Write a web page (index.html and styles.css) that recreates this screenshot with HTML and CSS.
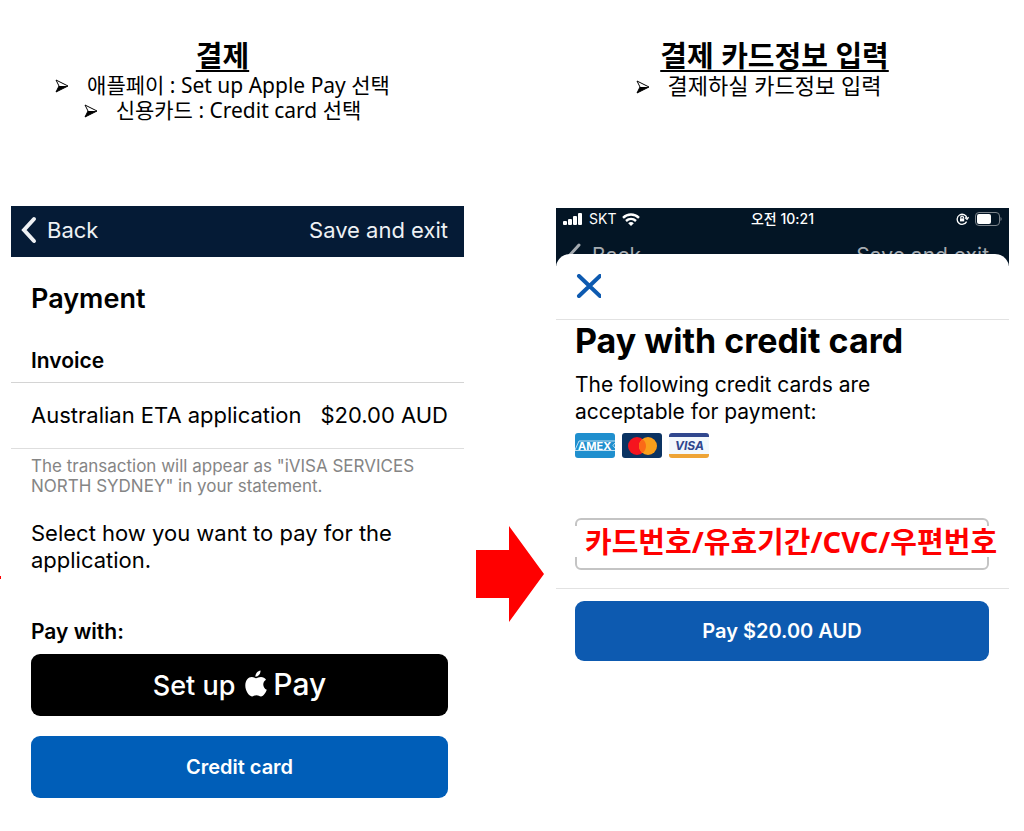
FILE: index.html
```html
<!DOCTYPE html>
<html lang="ko">
<head>
    <meta charset="UTF-8">
    <meta name="viewport" content="width=device-width, initial-scale=1.0">
    <title>결제</title>
    <link rel="stylesheet" href="styles.css">
</head>
<body>

    <main class="steps">
        <!-- Tip of the arrow coming from the previous step -->
        <span class="prev-tip"></span>

        <!-- Step: choose a payment method -->
        <section class="step">
            <div class="guide">
                <h1>결제</h1>
                <ul>
                    <li><svg class="bullet" viewBox="0 0 14 14"><path d="M1 1L13 7L1 13L4 7Z" fill="#fff" stroke="#000"/><path d="M4 7H13L1 13Z"/></svg>애플페이 : Set up Apple Pay 선택</li>
                    <li><svg class="bullet" viewBox="0 0 14 14"><path d="M1 1L13 7L1 13L4 7Z" fill="#fff" stroke="#000"/><path d="M4 7H13L1 13Z"/></svg>신용카드 : Credit card 선택</li>
                </ul>
            </div>

            <div class="phone">
                <nav class="navbar">
                    <a href="#" class="back"><svg width="16" height="28" viewBox="0 0 16 28"><path d="M13 3L3 14L13 25" fill="none" stroke="currentColor" stroke-width="4" stroke-linecap="round"/></svg>Back</a>
                    <a href="#">Save and exit</a>
                </nav>
                <h2 class="payment-title">Payment</h2>
                <h3 class="invoice-title">Invoice</h3>
                <div class="invoice-row">
                    <span>Australian ETA application</span>
                    <span>$20.00 AUD</span>
                </div>
                <p class="note">The transaction will appear as "iVISA SERVICES NORTH SYDNEY" in your statement.</p>
                <p class="select-text">Select how you want to pay for the application.</p>
                <h3 class="pay-with">Pay with:</h3>
                <div class="buttons">
                    <button type="button" class="btn apple-pay">
                        <span>Set up</span>
                        <svg width="22" height="27" viewBox="0 0 22 27" fill="#fff"><path d="M15.5 0.5C15.7 3.8 13.2 6.8 10.4 6.7C10.2 3.6 12.8 0.9 15.5 0.5Z"/><path d="M11 8.2C12.3 8.2 13.7 7 16 7C18 7 19.9 8 21 9.7C17 12 17.5 18 21.8 19.8C20.8 22.5 18.6 26.4 16 26.4C14.3 26.4 13.6 25.3 11.5 25.3C9.4 25.3 8.6 26.4 7 26.4C3.7 26.4 0.3 20.6 0.3 15.6C0.3 10.2 3.4 7 6.8 7C8.7 7 10 8.2 11 8.2Z"/></svg>
                        <span class="pay-word">Pay</span>
                    </button>
                    <button type="button" class="btn credit">Credit card</button>
                </div>
            </div>
        </section>

        <svg class="arrow" viewBox="0 0 68 96"><path d="M0 24H33V0L68 48L33 96V72H0Z" fill="#ff0000"/></svg>

        <!-- Step: enter the card details -->
        <section class="step card-step">
            <div class="guide">
                <h1>결제 카드정보 입력</h1>
                <ul>
                    <li><svg class="bullet" viewBox="0 0 14 14"><path d="M1 1L13 7L1 13L4 7Z" fill="#fff" stroke="#000"/><path d="M4 7H13L1 13Z"/></svg>결제하실 카드정보 입력</li>
                </ul>
            </div>

            <div class="phone">
                <div class="behind">
                    <div class="status">
                        <div class="carrier">
                            <svg width="20" height="12" viewBox="0 0 20 12" fill="#fff"><rect y="8" width="4" height="4" rx="1"/><rect x="5" y="6" width="4" height="6" rx="1"/><rect x="10" y="3" width="4" height="9" rx="1"/><rect x="15" width="4" height="12" rx="1"/></svg>
                            <span>SKT</span>
                            <svg width="18" height="13" viewBox="0 0 18 13" fill="none" stroke="#fff" stroke-width="2.4"><path d="M1 4.8C5.5 0.4 12.5 0.4 17 4.8"/><path d="M4 8C7 5.2 11 5.2 14 8"/><path d="M9 13L6.2 10.2C7.8 8.7 10.2 8.7 11.8 10.2Z" fill="#fff" stroke="none"/></svg>
                        </div>
                        <span class="time">오전 10:21</span>
                        <div class="battery">
                            <svg width="13" height="12" viewBox="0 0 13 12" fill="none" stroke="#fff" stroke-width="1.3"><path d="M10.6 8.6A5 5 0 1 1 11 5"/><path d="M9 4.6L11 6.4L12.6 4.2"/><path d="M4.8 5.6V4.4A1.3 1.3 0 0 1 7.4 4.4V5.6"/><rect x="4" y="5.4" width="4.2" height="3" fill="#fff" stroke="none"/></svg>
                            <svg width="27" height="14" viewBox="0 0 27 14"><rect x="0.5" y="0.5" width="24" height="13" rx="3.5" fill="none" stroke="#7d858d"/><rect x="2" y="2" width="14" height="10" rx="2" fill="#fff"/><path d="M25.500 5C27 5.500 27 8.500 25.500 9Z" fill="#7d858d"/></svg>
                        </div>
                    </div>
                    <nav class="navbar">
                        <a href="#" class="back"><svg width="16" height="28" viewBox="0 0 16 28"><path d="M13 3L3 14L13 25" fill="none" stroke="currentColor" stroke-width="3" stroke-linecap="round"/></svg>Back</a>
                        <a href="#">Save and exit</a>
                    </nav>
                </div>

                <div class="sheet">
                    <div class="sheet-bar">
                        <button type="button" class="close" aria-label="Close"><svg width="26" height="24" viewBox="0 0 26 24"><path d="M4 2L25 22M25 2L4 22" stroke="#0d5ab0" stroke-width="4" stroke-linecap="round"/></svg></button>
                    </div>
                    <div class="sheet-body">
                        <h2>Pay with credit card</h2>
                        <p>The following credit cards are acceptable for payment:</p>
                        <div class="logos">
                            <svg width="40" height="25" viewBox="0 0 40 25"><rect width="40" height="25" rx="3" fill="#1f8fce"/><path d="M0 17L4 8H40M0 17.500H40M40 10L38 12.500L40 15" fill="none" stroke="#bfe0f3"/><text x="3" y="17" font-size="11" class="amex">AMEX</text></svg>
                            <svg width="40" height="25" viewBox="0 0 40 25"><rect width="40" height="25" rx="3" fill="#0b3362"/><circle cx="15" cy="13" r="9" fill="#f5141e"/><circle cx="26" cy="13" r="9" fill="#f99f1b"/><path d="M20.500 5.900A9 9 0 0 1 20.500 20.100A9 9 0 0 1 20.500 5.900Z" fill="#fb6a17"/></svg>
                            <svg width="40" height="25" viewBox="0 0 40 25"><rect width="40" height="25" rx="3" fill="#f3f8fc"/><path d="M0 4V3A3 3 0 0 1 3 0H37A3 3 0 0 1 40 3V4Z" fill="#30478e"/><path d="M0 21V22A3 3 0 0 0 3 25H37A3 3 0 0 0 40 22V21Z" fill="#eea436"/><text x="6" y="17" font-size="12" class="visa">VISA</text></svg>
                        </div>
                        <div class="card-field">
                            <input type="text" id="card-number">
                            <label for="card-number">카드번호/유효기간/CVC/우편번호</label>
                        </div>
                    </div>
                    <div class="sheet-footer">
                        <button type="button" class="btn pay">Pay $20.00 AUD</button>
                    </div>
                </div>
            </div>
        </section>
    </main>

</body>
</html>
```
FILE: styles.css
```css
* {
    box-sizing: border-box;
}

body {
    margin: 0;
    background-color: #fff;
    color: #000;
    font-family: Inter, "Noto Sans CJK KR", sans-serif;
    font-size: 22px;
    line-height: 27px;
}

h1, h2, h3, p, ul {
    margin: 0;
    padding: 0;
}

a {
    color: inherit;
    text-decoration: none;
}

.steps {
    position: relative;
    display: grid;
    grid-template-columns: 1fr 68px 1fr;
    column-gap: 12px;
    padding: 38px 15px 32px 11px;
}

.prev-tip {
    position: absolute;
    left: 0;
    top: 576px;
    width: 1px;
    height: 3px;
    background-color: #ff0000;
}

.arrow {
    width: 100%;
    margin-top: 488px;
}

/* Instructions above each phone */
.guide {
    height: 168px;
    padding-right: 30px;
    text-align: center;
    font-family: "Noto Sans", "Noto Sans CJK KR", sans-serif;
}

.guide h1 {
    font-size: 29px;
    line-height: 35px;
    font-weight: 700;
    text-decoration: underline;
    text-decoration-thickness: 2px;
    text-underline-offset: 3px;
}

.guide ul {
    list-style: none;
    font-size: 21px;
    line-height: 25px;
}

.bullet {
    width: 14px;
    height: 14px;
    margin-right: 18px;
}

.card-step .guide {
    height: 170px;
    padding-right: 16px;
}

.card-step .guide ul {
    padding-right: 32px;
    font-size: 22px;
}

/* Payment screen */
.navbar {
    display: flex;
    justify-content: space-between;
    align-items: center;
    height: 51px;
    padding: 0 16px 3px 10px;
    background-color: #051b36;
    color: #eef1f4;
}

.back {
    display: flex;
    align-items: center;
    gap: 10px;
}

.payment-title {
    padding: 24px 20px 0;
    font-size: 27px;
    line-height: 36px;
    font-weight: 600;
}

.invoice-title {
    padding: 30px 20px 8px;
    border-bottom: 1px solid #d4d4d4;
    font-size: 21px;
    font-weight: 600;
}

.invoice-row {
    display: flex;
    justify-content: space-between;
    padding: 19px 16px 19px 20px;
    border-bottom: 1px solid #dedede;
}

.note {
    padding: 7px 20px 0;
    color: #858585;
    font-size: 17px;
    line-height: 20px;
}

.select-text {
    padding: 24px 20px 0;
}

.pay-with {
    padding: 44px 20px 0;
    font-size: 21px;
    font-weight: 600;
}

.buttons {
    display: flex;
    flex-direction: column;
    gap: 20px;
    padding: 9px 16px 0 20px;
}

.btn {
    display: flex;
    justify-content: center;
    align-items: center;
    width: 100%;
    height: 62px;
    padding: 0;
    border: none;
    border-radius: 9px;
    color: #fff;
    font-family: inherit;
    font-size: 20px;
    font-weight: 600;
    cursor: pointer;
}

.apple-pay {
    gap: 6px;
    background-color: #000;
    font-size: 27px;
    font-weight: 500;
}

.apple-pay svg {
    margin: 0 0 4px 4px;
}

.pay-word {
    padding-bottom: 3px;
    font-size: 30px;
}

.credit {
    background-color: #005eb8;
}

/* Credit card screen */
.behind {
    height: 58px;
    overflow: hidden;
    background-color: #031525;
}

.behind .navbar {
    padding: 0 20px 0 10px;
    background-color: transparent;
    color: #a5abb1;
    font-size: 21px;
}

.status {
    display: grid;
    grid-template-columns: 1fr auto 1fr;
    align-items: center;
    height: 22px;
    padding: 0 7px;
    color: #fff;
    font-size: 14px;
    line-height: 22px;
}

.carrier, .battery {
    display: flex;
    align-items: center;
    gap: 6px;
}

.battery {
    justify-content: flex-end;
}

.time {
    font-weight: 500;
}

.sheet {
    position: relative;
    margin-top: -12px;
    border-radius: 14px 14px 0 0;
    background-color: #fff;
}

.sheet-bar {
    padding: 20px 19px 21px;
    border-bottom: 1px solid #e2e2e2;
}

.close {
    display: block;
    padding: 0;
    border: none;
    background: none;
    line-height: 0;
    cursor: pointer;
}

.sheet-body {
    padding: 0 20px 18px 19px;
    border-bottom: 1px solid #e2e2e2;
}

.sheet-body h2 {
    font-size: 34px;
    line-height: 42px;
    font-weight: 700;
}

.sheet-body p {
    max-width: 340px;
    padding-top: 9px;
    font-size: 21px;
}

.logos {
    display: flex;
    gap: 7px;
    padding-top: 8px;
}

.logos text {
    font-family: Inter, sans-serif;
    font-weight: 700;
}

.amex {
    fill: #fff;
}

.visa {
    fill: #30478e;
    font-style: italic;
}

.card-field {
    position: relative;
    margin-top: 60px;
}

.card-field input {
    display: block;
    width: 100%;
    height: 52px;
    padding: 0 10px;
    border: 2px solid #c4c4c4;
    border-radius: 6px;
    font: inherit;
}

/* Instruction laid over the field */
.card-field label {
    position: absolute;
    top: 8px;
    left: 0;
    padding-left: 10px;
    background-color: #fff;
    color: #ff0000;
    font-family: "Noto Sans", "Noto Sans CJK KR", sans-serif;
    font-size: 29px;
    line-height: 31px;
    font-weight: 700;
    white-space: nowrap;
}

.sheet-footer {
    padding: 12px 20px 0 19px;
}

.pay {
    height: 60px;
    background-color: #0d5ab0;
}
```
